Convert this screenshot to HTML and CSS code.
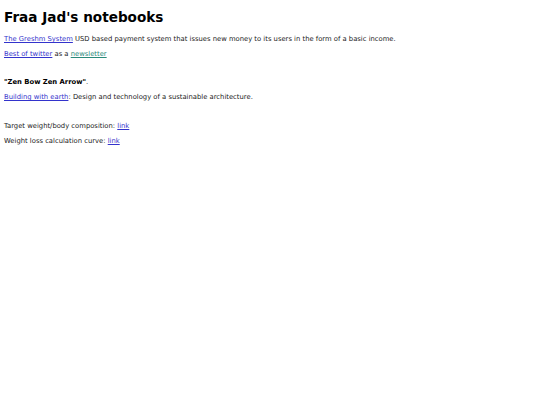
FILE: index.html
```html
<!DOCTYPE html>
<html>
<head>
<meta charset="utf-8">
<link rel="stylesheet" href="styles.css">
</head>
<body>
<h1 class="title">Fraa Jad's notebooks</h1>
<p class="line"><a href="#a">The Greshm System</a> USD based payment system that issues new money to its users in the form of a basic income.</p>
<p class="line"><a href="#b">Best of twitter</a> as a <a class="visited" href="#c">newsletter</a></p>
<p class="line gap"><b>"Zen Bow Zen Arrow"</b>.</p>
<p class="line"><a href="#d">Building with earth</a>: Design and technology of a sustainable architecture.</p>
<p class="line gap2"><span>Target weight/body composition: </span><a href="#e">link</a></p>
<p class="line">Weight loss calculation curve: <a href="#f">link</a></p>
</body>
</html>
```
FILE: styles.css
```css
html, body { background: #fff; }
body {
  margin: 0;
  padding: 4px;
  font-family: "DejaVu Sans", Verdana, sans-serif;
  font-size: 6.8px;
  color: #222;
}
.title {
  font-size: 13.6px;
  font-weight: bold;
  color: #000;
  margin: 3px 0 7px 0;
  line-height: 20px;
}
.line {
  margin: 0 0 5px 0;
  line-height: 10px;
}
.gap { margin-top: 18px; }
.gap2 { margin-top: 19px; }
a { color: #3333cc; }
a.visited { color: #2a8a7a; }
b { color: #000; }
```
